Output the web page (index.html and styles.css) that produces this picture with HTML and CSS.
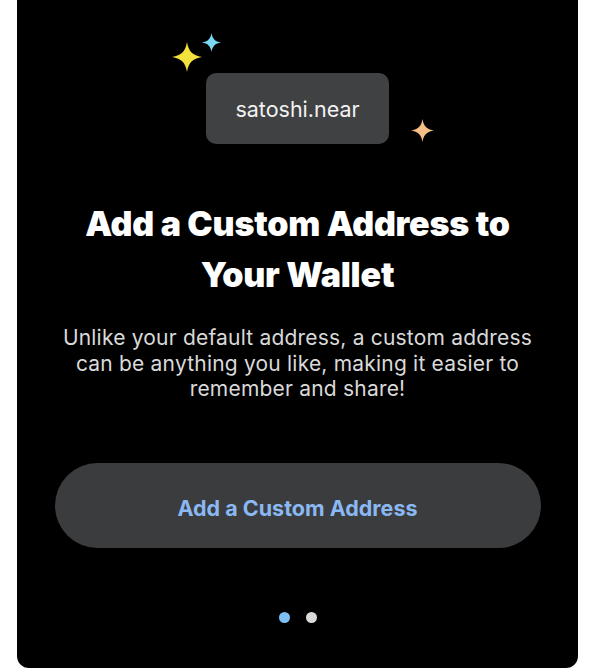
FILE: index.html
```html
<!DOCTYPE html>
<html lang="en">
<head>
<meta charset="utf-8">
<title>Custom Address</title>
<link rel="stylesheet" href="styles.css">
</head>
<body>
<div class="card">
  <div class="badge-wrap">
    <svg class="sparkle sparkle-yellow" viewBox="0 0 24 24"><path d="M12 0 C13.2 7.5 16.5 10.8 24 12 C16.5 13.2 13.2 16.5 12 24 C10.8 16.5 7.5 13.2 0 12 C7.5 10.8 10.8 7.5 12 0 Z"/></svg>
    <svg class="sparkle sparkle-cyan" viewBox="0 0 24 24"><path d="M12 0 C13.2 7.5 16.5 10.8 24 12 C16.5 13.2 13.2 16.5 12 24 C10.8 16.5 7.5 13.2 0 12 C7.5 10.8 10.8 7.5 12 0 Z"/></svg>
    <svg class="sparkle sparkle-orange" viewBox="0 0 24 24"><path d="M12 0 C13.2 7.5 16.5 10.8 24 12 C16.5 13.2 13.2 16.5 12 24 C10.8 16.5 7.5 13.2 0 12 C7.5 10.8 10.8 7.5 12 0 Z"/></svg>
    <div class="badge">satoshi.near</div>
  </div>
  <h1 class="title">Add a Custom Address to Your Wallet</h1>
  <p class="desc">Unlike your default address, a custom address can be anything you like, making it easier to remember and share!</p>
  <button class="cta">Add a Custom Address</button>
  <div class="dots">
    <span class="dot dot-active"></span>
    <span class="dot"></span>
  </div>
</div>
</body>
</html>
```

FILE: styles.css
```css
html, body {
  margin: 0;
  padding: 0;
  background: #ffffff;
}

body {
  font-family: "Inter", "Liberation Sans", sans-serif;
  width: 600px;
  height: 670px;
  overflow: hidden;
}

.card {
  box-sizing: border-box;
  width: 561px;
  height: 680px;
  margin: -12px 0 0 17px;
  padding-top: 85px;
  background: #000000;
  border-radius: 12px;
  display: flex;
  flex-direction: column;
  align-items: center;
}

.badge-wrap {
  position: relative;
}

.badge {
  width: 183px;
  height: 71px;
  border-radius: 10px;
  background: #404143;
  color: #f2f2f2;
  font-size: 21.5px;
  font-weight: 400;
  display: flex;
  align-items: center;
  justify-content: center;
}

.sparkle {
  position: absolute;
}

.sparkle-yellow {
  width: 30px;
  height: 30px;
  left: -34px;
  top: -31px;
  fill: #f3e23c;
}

.sparkle-cyan {
  width: 19px;
  height: 19px;
  left: -4px;
  top: -40px;
  fill: #79d8f2;
}

.sparkle-orange {
  width: 23px;
  height: 23px;
  left: 205px;
  top: 46px;
  fill: #f7be85;
}

.title {
  margin: 54px 0 0;
  width: 480px;
  text-align: center;
  color: #ffffff;
  font-size: 34px;
  font-weight: 900;
  line-height: 51px;
  letter-spacing: -0.2px;
}

.desc {
  margin: 25px 0 0;
  width: 500px;
  text-align: center;
  color: #d9d9d9;
  font-size: 21px;
  line-height: 25.5px;
  letter-spacing: 0.2px;
}

.cta {
  margin-top: 61px;
  width: 486px;
  height: 85px;
  padding: 5px 0 0;
  border: none;
  border-radius: 43px;
  background: #3b3c3e;
  color: #8ab8f2;
  font-family: inherit;
  font-size: 21.5px;
  font-weight: 700;
}

.dots {
  margin-top: 64px;
  display: flex;
  gap: 16px;
}

.dot {
  width: 11px;
  height: 11px;
  border-radius: 50%;
  background: #d9d9d9;
}

.dot-active {
  background: #7cc0f5;
}
```
